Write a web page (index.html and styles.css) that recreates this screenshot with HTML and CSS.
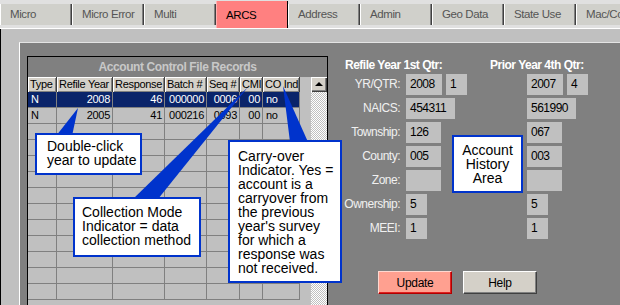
FILE: index.html
```html
<!DOCTYPE html>
<html lang="en">
<head>
  <meta charset="UTF-8" />
  <title>ARCS</title>
  <link rel="stylesheet" href="styles.css">
</head>
<body>

  <!-- tab strip -->
  <div class="tabs">
    <div class="tab">Micro</div>
    <div class="tab">Micro Error</div>
    <div class="tab">Multi</div>
    <div class="tab active">ARCS</div>
    <div class="tab">Address</div>
    <div class="tab">Admin</div>
    <div class="tab">Geo Data</div>
    <div class="tab">State Use</div>
    <div class="tab">Mac/Comp</div>
  </div>

  <div class="frame">
    <div class="panel">

      <!-- records list -->
      <div class="records">
        <div class="records-title">Account Control File Records</div>
        <div class="records-body">
          <div class="grid">
            <div class="grow head">
              <div class="hcell">Type</div>
              <div class="hcell">Refile Year</div>
              <div class="hcell">Response</div>
              <div class="hcell">Batch #</div>
              <div class="hcell">Seq #</div>
              <div class="hcell">CMI</div>
              <div class="hcell">CO Ind</div>
            </div>
            <div class="grow selected">
              <div class="cell">N</div>
              <div class="cell num">2008</div>
              <div class="cell num">46</div>
              <div class="cell num">000000</div>
              <div class="cell num">0006</div>
              <div class="cell num">00</div>
              <div class="cell">no</div>
            </div>
            <div class="grow">
              <div class="cell">N</div>
              <div class="cell num">2005</div>
              <div class="cell num">41</div>
              <div class="cell num">000216</div>
              <div class="cell num">0093</div>
              <div class="cell num">00</div>
              <div class="cell">no</div>
            </div>
            <div class="grow"><div class="cell"></div><div class="cell"></div><div class="cell"></div><div class="cell"></div><div class="cell"></div><div class="cell"></div><div class="cell"></div></div>
            <div class="grow"><div class="cell"></div><div class="cell"></div><div class="cell"></div><div class="cell"></div><div class="cell"></div><div class="cell"></div><div class="cell"></div></div>
            <div class="grow"><div class="cell"></div><div class="cell"></div><div class="cell"></div><div class="cell"></div><div class="cell"></div><div class="cell"></div><div class="cell"></div></div>
            <div class="grow"><div class="cell"></div><div class="cell"></div><div class="cell"></div><div class="cell"></div><div class="cell"></div><div class="cell"></div><div class="cell"></div></div>
            <div class="grow"><div class="cell"></div><div class="cell"></div><div class="cell"></div><div class="cell"></div><div class="cell"></div><div class="cell"></div><div class="cell"></div></div>
            <div class="grow"><div class="cell"></div><div class="cell"></div><div class="cell"></div><div class="cell"></div><div class="cell"></div><div class="cell"></div><div class="cell"></div></div>
            <div class="grow"><div class="cell"></div><div class="cell"></div><div class="cell"></div><div class="cell"></div><div class="cell"></div><div class="cell"></div><div class="cell"></div></div>
            <div class="grow"><div class="cell"></div><div class="cell"></div><div class="cell"></div><div class="cell"></div><div class="cell"></div><div class="cell"></div><div class="cell"></div></div>
            <div class="grow"><div class="cell"></div><div class="cell"></div><div class="cell"></div><div class="cell"></div><div class="cell"></div><div class="cell"></div><div class="cell"></div></div>
            <div class="grow"><div class="cell"></div><div class="cell"></div><div class="cell"></div><div class="cell"></div><div class="cell"></div><div class="cell"></div><div class="cell"></div></div>
            <div class="grow"><div class="cell"></div><div class="cell"></div><div class="cell"></div><div class="cell"></div><div class="cell"></div><div class="cell"></div><div class="cell"></div></div>
          </div>
          <div class="filler"></div>
          <div class="scroll">
            <div class="scroll-up"></div>
          </div>
        </div>
      </div>

      <!-- account history -->
      <div class="history">
        <div class="heads">
          <span class="head-cur">Refile Year 1st Qtr:</span>
          <span>Prior Year 4th Qtr:</span>
        </div>
        <div class="fields">
          <div class="frow">
            <label>YR/QTR:</label>
            <div class="cur"><span class="fld w36">2008</span><span class="fld w21">1</span></div>
            <div class="prior"><span class="fld w36">2007</span><span class="fld w21">4</span></div>
          </div>
          <div class="frow">
            <label>NAICS:</label>
            <div class="cur"><span class="fld w49">454311</span></div>
            <div class="prior"><span class="fld w49">561990</span></div>
          </div>
          <div class="frow">
            <label>Township:</label>
            <div class="cur"><span class="fld w35">126</span></div>
            <div class="prior"><span class="fld w35">067</span></div>
          </div>
          <div class="frow">
            <label>County:</label>
            <div class="cur"><span class="fld w35">005</span></div>
            <div class="prior"><span class="fld w35">003</span></div>
          </div>
          <div class="frow">
            <label>Zone:</label>
            <div class="cur"><span class="fld w35"></span></div>
            <div class="prior"><span class="fld w35"></span></div>
          </div>
          <div class="frow">
            <label>Ownership:</label>
            <div class="cur"><span class="fld w21">5</span></div>
            <div class="prior"><span class="fld w21">5</span></div>
          </div>
          <div class="frow">
            <label>MEEI:</label>
            <div class="cur"><span class="fld w21">1</span></div>
            <div class="prior"><span class="fld w21">1</span></div>
          </div>
        </div>
        <div class="actions">
          <button class="btn btn-update">Update</button>
          <button class="btn">Help</button>
        </div>
      </div>

    </div>
  </div>

  <!-- callout pointers -->
  <svg class="pointers" width="620" height="305" viewBox="0 0 620 305">
    <polygon points="78,108 56,136 72,136" />
    <polygon points="248,87 133,199 158,199" />
    <polygon points="283,86 290,142 308,142" />
  </svg>

  <div class="callout c-year">Double-click<br>year to update</div>
  <div class="callout c-cmi">Collection Mode<br>Indicator = data<br>collection method</div>
  <div class="callout c-carry">Carry-over<br>Indicator. Yes =<br>account is a<br>carryover from<br>the previous<br>year's survey<br>for which a<br>response was<br>not received.</div>
  <div class="callout c-history">Account<br>History<br>Area</div>

</body>
</html>
```

FILE: styles.css
```css
* {
  box-sizing: border-box;
}

html, body {
  margin: 0;
  height: 305px;
  overflow: hidden;
}

body {
  width: 620px;
  position: relative;
  background: #c0c0c0;
  font-family: 'Liberation Sans', Arial, sans-serif;
}

/* tabs */
.tabs {
  display: flex;
  height: 29px;
  background: #e0e0e0;
  border-bottom: 1px solid #fff;
  overflow: hidden;
}

.tab {
  flex: none;
  width: 72px;
  height: 21px;
  margin-top: 4px;
  padding-left: 9px;
  background: #d0d0cb;
  color: #555;
  font-size: 11.5px;
  letter-spacing: -0.4px;
  line-height: 21px;
  white-space: nowrap;
  overflow: hidden;
  border-left: 1px solid #fff;
  border-right: 1px solid #404040;
  box-shadow: inset -1px 0 #808080;
}

.tab.active {
  margin-top: 1px;
  height: 27px;
  line-height: 28px;
  background: #ff8080;
  color: #000;
  border-left-color: #ffb0b0;
  border-right-color: #000;
  box-shadow: none;
}

/* frame + panel */
.frame {
  height: 276px;
  padding: 13px 0 0 18px;
  border-left: 1px solid #000;
}

.panel {
  display: flex;
  align-items: flex-start;
  height: 100%;
  padding: 13px 0 0 7px;
  background: #808080;
  border-top: 1px solid #e4e4e4;
  border-left: 1px solid #fff;
}

/* records list */
.records {
  flex: none;
  width: 301px;
  height: 260px;
  border: 1px solid #000;
  border-bottom: none;
}

.records-title {
  height: 20px;
  line-height: 20px;
  text-align: center;
  font-size: 12px;
  font-weight: bold;
  letter-spacing: -0.4px;
  color: #c8c8c8;
}

.records-body {
  display: flex;
  height: 240px;
}

.grid {
  width: 272px;
  background: #c0c0c0;
  font-size: 11px;
  letter-spacing: -0.3px;
}

.grow {
  display: grid;
  grid-template-columns: 29px 56px 52px 42px 33px 23px 37px;
  height: 16px;
}

.grow.head {
  height: 15px;
}

.hcell {
  padding-left: 2px;
  line-height: 15px;
  background: #d4d0c8;
  border-right: 1px solid #404040;
  box-shadow: inset 1px 1px #fff, inset -1px -1px #808080;
  white-space: nowrap;
  overflow: hidden;
}

.cell {
  padding: 0 2px 0 3px;
  line-height: 15px;
  border-right: 1px solid #808080;
  border-bottom: 1px solid #808080;
  white-space: nowrap;
  overflow: hidden;
}

.cell.num {
  text-align: right;
}

.grow.selected {
  background: #0a246a;
  color: #fff;
}

.filler {
  width: 11px;
  background: #c0c0c0;
}

.scroll {
  width: 16px;
  background: repeating-conic-gradient(#fff 0 25%, #c0c0c0 0 50%) 0 0 / 2px 2px;
}

.scroll-up {
  position: relative;
  height: 15px;
  background: #d4d0c8;
  box-shadow: inset 1px 1px #fff, inset -1px -1px #404040, inset -2px -2px #808080;
}

.scroll-up::after {
  content: '';
  position: absolute;
  left: 4px;
  top: 5px;
  border-left: 4px solid transparent;
  border-right: 4px solid transparent;
  border-bottom: 4px solid #000;
}

/* account history */
.history {
  margin-left: 16px;
  padding-top: 3px;
  color: #f0f0f0;
  font-size: 12px;
  letter-spacing: -0.5px;
}

.heads {
  display: flex;
  height: 13px;
  line-height: 13px;
  font-weight: bold;
  color: #fff;
  white-space: nowrap;
}

.head-cur {
  width: 146px;
  padding-left: 1px;
}

.fields {
  display: grid;
  row-gap: 3px;
  margin-top: 2px;
}

.frow {
  display: grid;
  grid-template-columns: 62px 121px auto;
  height: 21px;
}

.frow label {
  padding-right: 6px;
  text-align: right;
  line-height: 21px;
  white-space: nowrap;
}

.cur, .prior {
  display: flex;
  gap: 4px;
}

.fld {
  height: 21px;
  padding-left: 4px;
  line-height: 21px;
  background: #c0c0c0;
  color: #000;
}

.w21 { width: 21px; }
.w35 { width: 35px; }
.w36 { width: 36px; }
.w49 { width: 49px; }

.actions {
  display: flex;
  gap: 11px;
  margin: 32px 0 0 34px;
}

.btn {
  width: 74px;
  height: 23px;
  padding: 0;
  font-family: inherit;
  font-size: 12px;
  letter-spacing: -0.3px;
  color: #000;
  background: #d4d0c8;
  border: 1px solid;
  border-color: #fff #404040 #404040 #fff;
  box-shadow: inset -1px -1px #808080;
}

.btn-update {
  background: #ffa090;
  border-color: #ffd8d0 #b00000 #b00000 #ffd8d0;
  box-shadow: inset -1px -1px #e02020;
}

/* callouts */
.pointers {
  position: absolute;
  left: 0;
  top: 0;
  fill: #0033cc;
  pointer-events: none;
}

.callout {
  position: absolute;
  background: #fff;
  border: 2px solid #0033cc;
  color: #000;
  font: 14px/14px 'Liberation Sans', Arial, sans-serif;
  white-space: nowrap;
}

.c-year {
  left: 35px;
  top: 133px;
  width: 107px;
  height: 42px;
  padding: 4px 0 0 10px;
}

.c-cmi {
  left: 73px;
  top: 197px;
  width: 128px;
  height: 60px;
  padding: 6px 0 0 7px;
}

.c-carry {
  left: 228px;
  top: 140px;
  width: 114px;
  height: 143px;
  padding: 7px 0 0 8px;
}

.c-history {
  left: 452px;
  top: 135px;
  width: 71px;
  height: 58px;
  padding-top: 6px;
  text-align: center;
}
```
